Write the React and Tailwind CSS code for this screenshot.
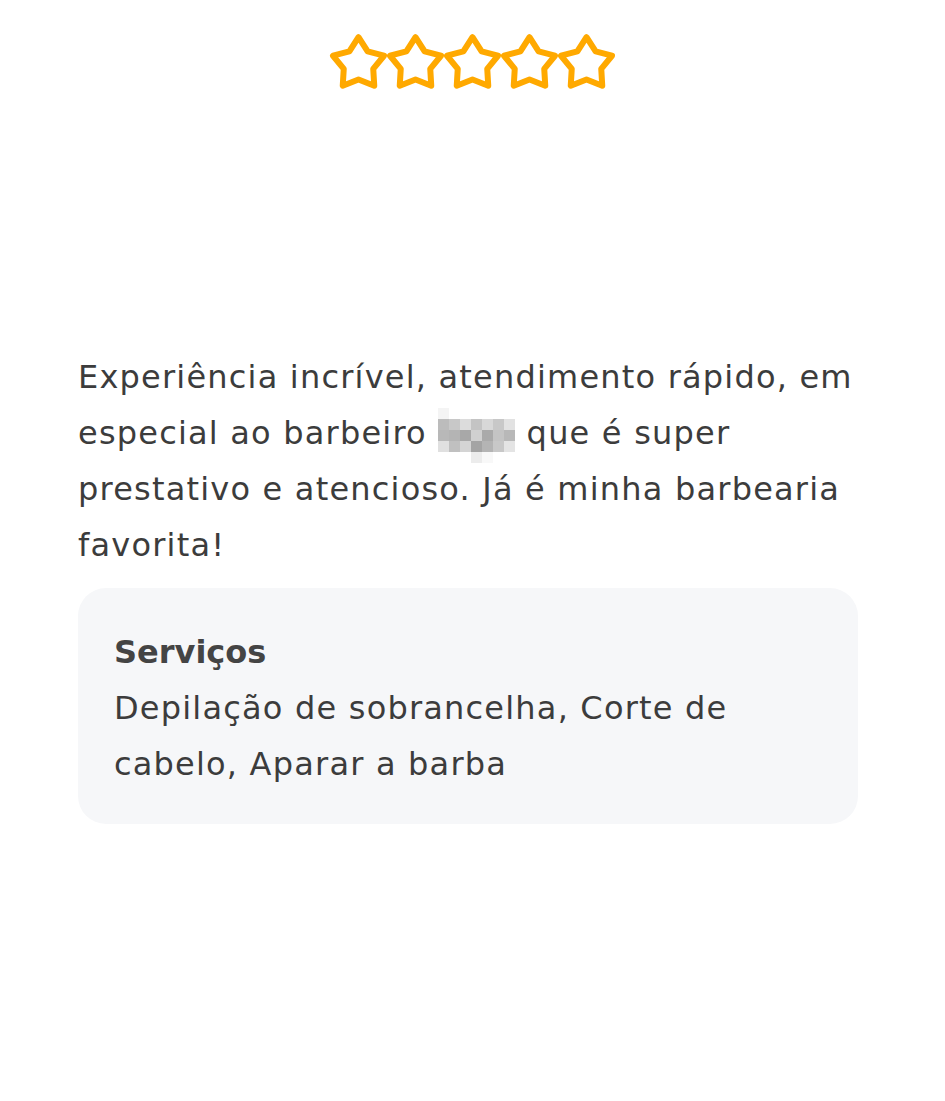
import React from 'react';

const STAR_POINTS =
  '28.5,3.2 37.61,17.46 53.99,21.72 43.24,34.79 44.25,51.68 28.5,45.5 12.75,51.68 13.76,34.79 3.01,21.72 19.39,17.46';

function Star() {
  return (
    <svg width="57" height="60" viewBox="0 0 57 60" className="overflow-visible shrink-0">
      <polygon
        points={STAR_POINTS}
        fill="none"
        stroke="#ffa900"
        strokeWidth="6"
        strokeLinejoin="round"
      />
    </svg>
  );
}

// pixelated (censored) name
const MOSAIC = [
  ['#f4f4f4', null, null, null, null, null, null],
  ['#bcbcbc', '#c8c8c8', '#dcdcdc', '#c4c4c4', '#d8d8d8', '#c8c8c8', '#e2e2e2'],
  ['#b8b8b8', '#b4b4b4', '#a8a8a8', '#d0d0d0', '#aaaaaa', '#c4c4c4', '#b8b8b8'],
  ['#e0e0e0', '#c0c0c0', '#d4d4d4', '#a4a4a4', '#b4b4b4', '#c8c8c8', '#e4e4e4'],
  [null, null, null, '#ececec', '#f8f8f8', null, null],
];

function Mosaic() {
  return (
    <span className="inline-flex flex-col w-[77px] h-[55px] -my-[10px] align-middle">
      {MOSAIC.map((row, i) => (
        <span key={i} className="flex h-[11px]">
          {row.map((c, j) => (
            <span key={j} className="w-[11px] h-[11px]" style={{ backgroundColor: c || 'transparent' }} />
          ))}
        </span>
      ))}
    </span>
  );
}

export default function App() {
  return (
    <div className="min-h-[1101px] bg-white font-['DejaVu_Sans',sans-serif] text-[#3c3c3c] text-[32px] leading-[56px] tracking-[1.2px]">
      {/* Rating */}
      <div className="flex justify-center pt-[34px]">
        <Star />
        <Star />
        <Star />
        <Star />
        <Star />
      </div>

      <div className="w-[780px] ml-[78px] pt-[255px]">
        {/* Review */}
        <p>
          Experiência incrível, atendimento rápido, em especial ao barbeiro <Mosaic /> que é super
          prestativo e atencioso. Já é minha barbearia favorita!
        </p>

        {/* Services */}
        <div className="mt-[15px] rounded-[28px] bg-[#f6f7f9] px-[36px] pt-[36px] pb-[32px]">
          <div className="font-bold tracking-normal text-[#444]">Serviços</div>
          <div>Depilação de sobrancelha, Corte de cabelo, Aparar a barba</div>
        </div>
      </div>
    </div>
  );
}
